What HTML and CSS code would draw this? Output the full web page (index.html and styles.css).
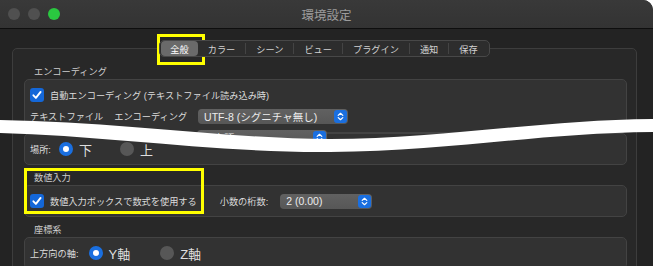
FILE: index.html
```html
<!DOCTYPE html>
<html lang="ja">
  <head>
    <meta charset="UTF-8" />
    <meta name="viewport" content="width=device-width, initial-scale=1.0" />
    <title>環境設定</title>
    <link rel="stylesheet" href="styles.css">
  </head>
  <body>
    <div class="window">
      <!-- Title bar -->
      <div class="titlebar">
        <div class="lights">
          <span class="light"></span>
          <span class="light"></span>
          <span class="light green"></span>
        </div>
        <div class="title">環境設定</div>
        <div></div>
      </div>

      <div class="content">
        <div class="tabs">
          <span class="tab active">全般</span>
          <span class="tab">カラー</span>
          <span class="tab">シーン</span>
          <span class="tab">ビュー</span>
          <span class="tab">プラグイン</span>
          <span class="tab">通知</span>
          <span class="tab">保存</span>
        </div>

        <div class="tabview">
          <div class="section-label">エンコーディング</div>
          <div class="group group-encoding">
            <div class="row">
              <span class="checkbox">
                <svg width="14" height="14" viewBox="0 0 14 14"><path d="M3.4 7.3 L5.9 9.9 L10.6 3.9" fill="none" stroke="#fff" stroke-width="1.9" stroke-linecap="round" stroke-linejoin="round"/></svg>
              </span>
              <span class="text">自動エンコーディング (テキストファイル読み込み時)</span>
            </div>
            <div class="row">
              <span class="text">テキストファイル</span>
              <span class="text gap-word">エンコーディング</span>
              <span class="popup popup-encoding">
                <span class="popup-value">UTF-8 (シグニチャ無し)</span>
                <span class="stepper">
                  <svg width="13" height="13" viewBox="0 0 13 13"><path d="M4.2 5.4 L6.5 3.3 L8.8 5.4 M4.2 7.6 L6.5 9.7 L8.8 7.6" fill="none" stroke="#fff" stroke-width="1.2" stroke-linecap="round" stroke-linejoin="round"/></svg>
                </span>
              </span>
            </div>
            <div class="row">
              <span class="popup popup-newline">
                <span class="popup-value">日本語</span>
                <span class="stepper">
                  <svg width="13" height="13" viewBox="0 0 13 13"><path d="M4.2 5.4 L6.5 3.3 L8.8 5.4 M4.2 7.6 L6.5 9.7 L8.8 7.6" fill="none" stroke="#fff" stroke-width="1.2" stroke-linecap="round" stroke-linejoin="round"/></svg>
                </span>
              </span>
            </div>
          </div>

          <div class="group">
            <div class="row">
              <span class="text">場所:</span>
              <span class="radio checked first-radio"></span>
              <span class="radio-label">下</span>
              <span class="radio next-radio"></span>
              <span class="radio-label">上</span>
            </div>
          </div>

          <div class="section-label">数値入力</div>
          <div class="group">
            <div class="row">
              <span class="checkbox">
                <svg width="14" height="14" viewBox="0 0 14 14"><path d="M3.4 7.3 L5.9 9.9 L10.6 3.9" fill="none" stroke="#fff" stroke-width="1.9" stroke-linecap="round" stroke-linejoin="round"/></svg>
              </span>
              <span class="text">数値入力ボックスで数式を使用する</span>
              <span class="text decimals-label">小数の桁数:</span>
              <span class="popup popup-decimals">
                <span class="popup-value">2 (0.00)</span>
                <span class="stepper">
                  <svg width="13" height="13" viewBox="0 0 13 13"><path d="M4.2 5.4 L6.5 3.3 L8.8 5.4 M4.2 7.6 L6.5 9.7 L8.8 7.6" fill="none" stroke="#fff" stroke-width="1.2" stroke-linecap="round" stroke-linejoin="round"/></svg>
                </span>
              </span>
            </div>
          </div>

          <div class="section-label">座標系</div>
          <div class="group">
            <div class="row">
              <span class="text">上方向の軸:</span>
              <span class="radio checked axis-radio"></span>
              <span class="radio-label">Y軸</span>
              <span class="radio axis-next"></span>
              <span class="radio-label">Z軸</span>
            </div>
          </div>
        </div>
      </div>

      <!-- annotations over the screenshot -->
      <svg class="tear" viewBox="0 0 653 266" width="653" height="266">
        <path d="M0 120 C 120 122 230 139 330 139 C 440 139 540 120 653 119 L 653 132 C 540 133 450 151 330 152 C 220 153 110 136 0 133 Z" fill="#fff"/>
      </svg>
      <div class="highlight highlight-tab"></div>
      <div class="highlight highlight-numeric"></div>
    </div>
  </body>
</html>
```

FILE: styles.css
```css
body {
  margin: 0;
  background: #fff;
  font-family: "Liberation Sans", "Noto Sans CJK JP", sans-serif;
}

.window {
  position: relative;
  width: 653px;
  height: 266px;
  overflow: hidden;
  background: #232323;
  border-radius: 0 10px 0 0;
}

.titlebar {
  height: 28px;
  display: grid;
  grid-template-columns: 1fr auto 1fr;
  align-items: center;
  background: linear-gradient(#393939, #333333);
  border-bottom: 1px solid #0e0e0e;
}

.lights {
  display: flex;
  gap: 8px;
  padding-left: 8px;
}

.light {
  width: 12px;
  height: 12px;
  border-radius: 50%;
  background: #505050;
}

.light.green {
  background: #2ac840;
}

.title {
  color: #9c9c9c;
  font-size: 12.5px;
  font-family: "Noto Sans CJK JP", sans-serif;
}

.content {
  padding: 11px 16px 0 12px;
}

.tabs {
  position: relative;
  z-index: 1;
  display: flex;
  width: max-content;
  margin: 0 auto;
  height: 17px;
  padding: 0 1px;
  box-sizing: border-box;
  background: #2d2d2d;
  border: 1px solid #484848;
  border-radius: 5px;
}

.tab {
  display: flex;
  align-items: center;
  padding: 0 10px;
  color: #d2d2d2;
  font-size: 9.2px;
  border-left: 1px solid #444;
  margin: 2px 0;
}

.tab.active,
.tab.active + .tab {
  border-left: none;
}

.tab.active {
  margin: 0;
  padding: 0 9px;
  background: #6a6a6a;
  color: #fff;
  border-radius: 4px;
}

.tabview {
  margin-top: -9px;
  height: 260px;
  padding: 17px 9px 0 11px;
  background: #282828;
  border: 1px solid #3d3d3d;
  border-radius: 5px;
}

.section-label {
  height: 12px;
  line-height: 12px;
  margin: 7px 0 1px 10px;
  font-size: 9.2px;
  color: #cdcdcd;
}

.tabview > .section-label:first-child {
  margin-top: 0;
}

.group {
  padding: 7px 5px;
  background: #323232;
  border: 1px solid #434343;
  border-radius: 5px;
}

.group-encoding {
  height: 54px;
  box-sizing: border-box;
  display: flex;
  flex-direction: column;
  gap: 5px;
}

.row {
  display: flex;
  align-items: center;
  height: 16px;
  flex-shrink: 0;
}

.text {
  font-size: 9.2px;
  color: #dcdcdc;
  white-space: nowrap;
}

.checkbox {
  width: 14px;
  height: 14px;
  border-radius: 3px;
  background: #1467d8;
  display: flex;
  margin-right: 6px;
}

.gap-word {
  margin-left: 11px;
}

.popup {
  display: flex;
  align-items: center;
  justify-content: space-between;
  height: 15px;
  box-sizing: border-box;
  padding: 0 1px 0 6px;
  background: linear-gradient(#616161, #575757);
  border-radius: 4px;
  color: #ececec;
  font-size: 10.5px;
}

.stepper {
  display: flex;
  width: 13px;
  height: 13px;
  border-radius: 3px;
  background: #1a6fe0;
}

.popup-encoding {
  width: 150px;
  margin-left: 11px;
}

.popup-newline {
  width: 130px;
  margin-left: 167px;
}

.popup-decimals {
  width: 92px;
  margin-left: 12px;
}

.decimals-label {
  margin-left: 23px;
}

.radio {
  width: 14px;
  height: 14px;
  border-radius: 50%;
  background: #575757;
  box-sizing: border-box;
}

.radio.checked {
  background: #1a6fe0;
  border: 4.5px solid #1a6fe0;
  background-color: #fff;
}

.radio-label {
  margin-left: 6px;
  font-size: 13px;
  color: #dedede;
}

.first-radio {
  margin-left: 8px;
}

.next-radio {
  margin-left: 28px;
}

.axis-radio {
  margin-left: 10px;
}

.axis-next {
  margin-left: 30px;
}

.tear {
  position: absolute;
  top: 0;
  left: 0;
}

.highlight {
  position: absolute;
  border: 3px solid #ffff00;
  box-sizing: border-box;
}

.highlight-tab {
  left: 157px;
  top: 34px;
  width: 48px;
  height: 31px;
}

.highlight-numeric {
  left: 24px;
  top: 168px;
  width: 180px;
  height: 46px;
}
```
